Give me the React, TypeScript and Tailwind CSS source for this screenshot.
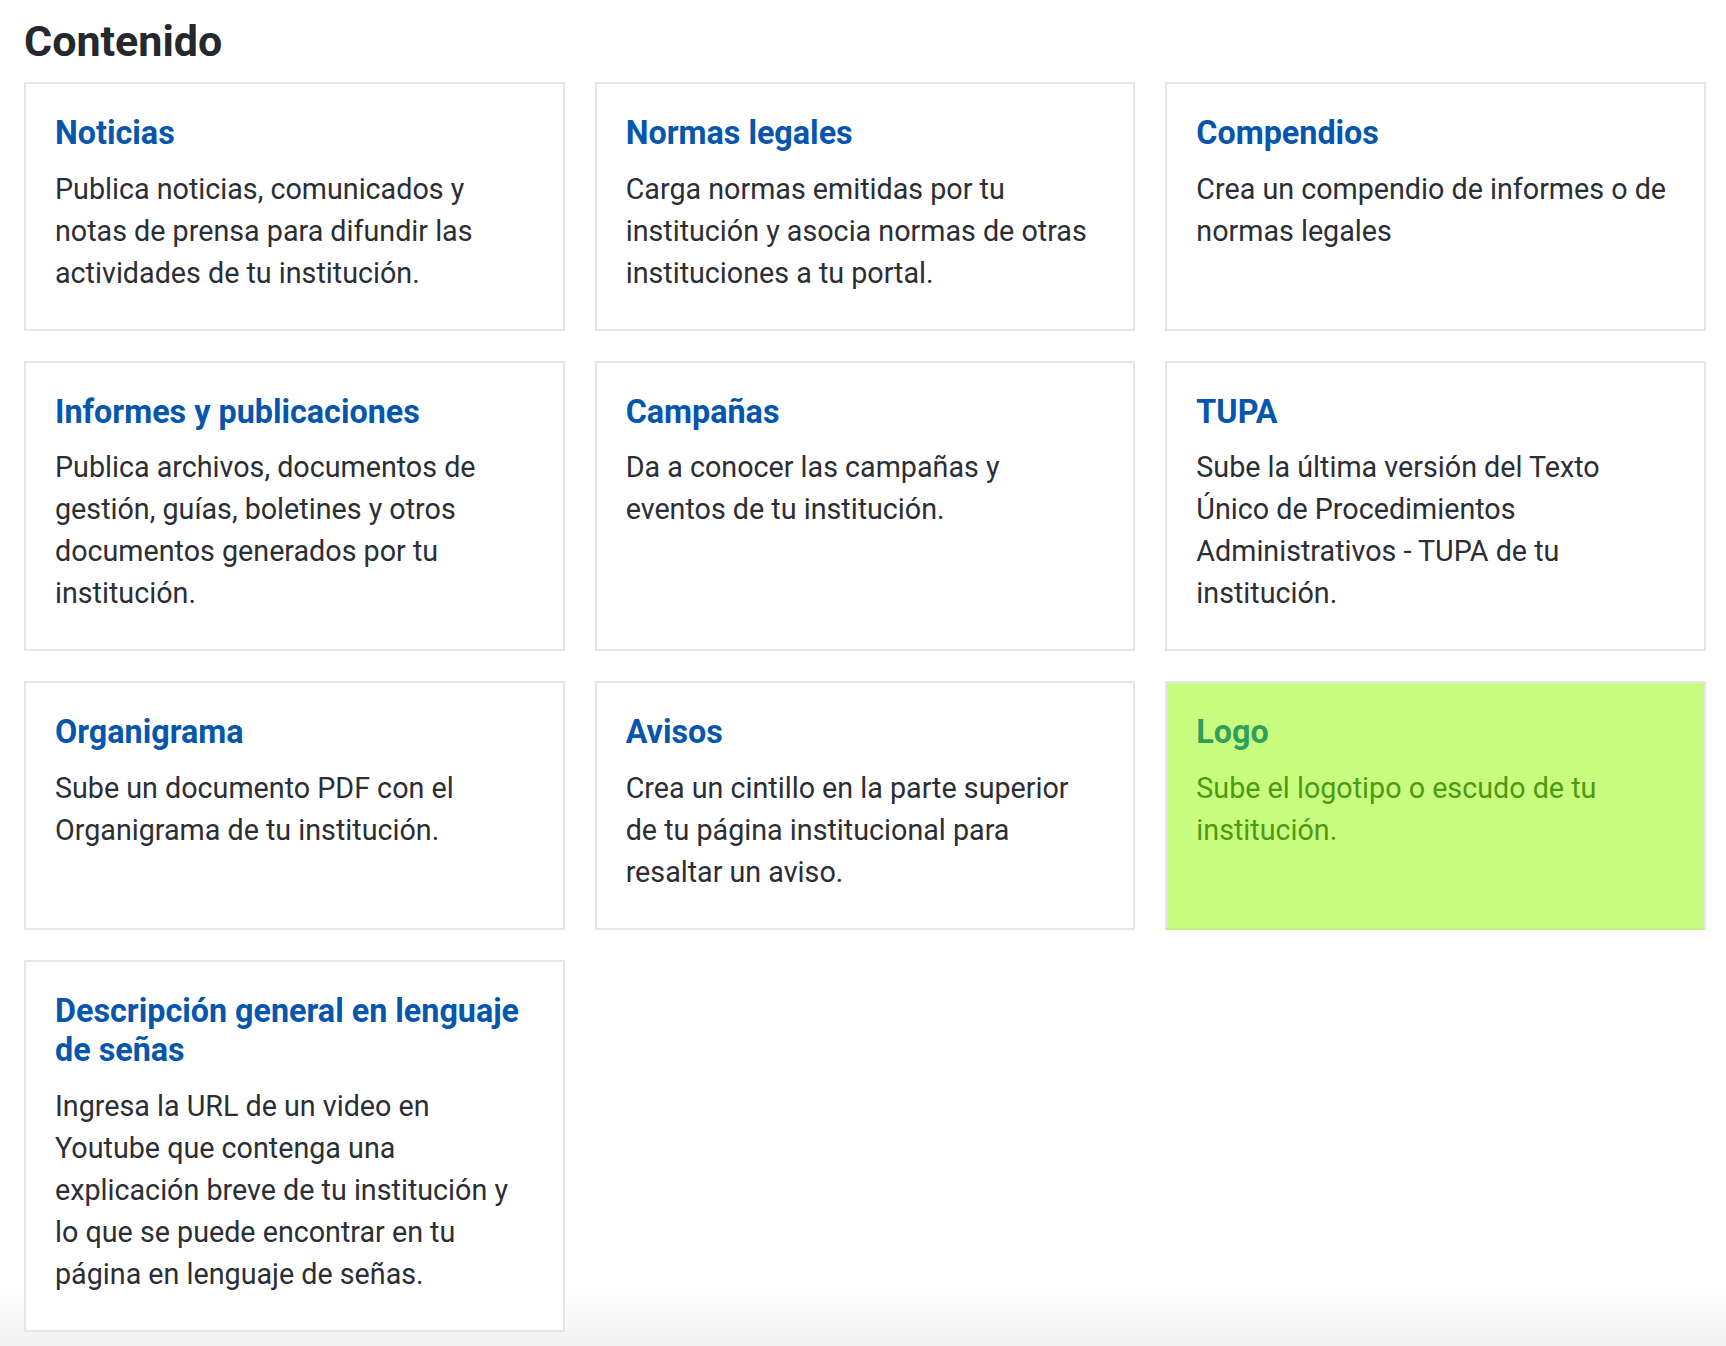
import * as React from 'react';

interface ContentCard {
  title: string;
  description: string;
  highlighted?: boolean;
}

const cards: ContentCard[] = [
  {
    title: 'Noticias',
    description:
      'Publica noticias, comunicados y notas de prensa para difundir las actividades de tu institución.',
  },
  {
    title: 'Normas legales',
    description:
      'Carga normas emitidas por tu institución y asocia normas de otras instituciones a tu portal.',
  },
  {
    title: 'Compendios',
    description: 'Crea un compendio de informes o de normas legales',
  },
  {
    title: 'Informes y publicaciones',
    description:
      'Publica archivos, documentos de gestión, guías, boletines y otros documentos generados por tu institución.',
  },
  {
    title: 'Campañas',
    description: 'Da a conocer las campañas y eventos de tu institución.',
  },
  {
    title: 'TUPA',
    description:
      'Sube la última versión del Texto Único de Procedimientos Administrativos - TUPA de tu institución.',
  },
  {
    title: 'Organigrama',
    description: 'Sube un documento PDF con el Organigrama de tu institución.',
  },
  {
    title: 'Avisos',
    description:
      'Crea un cintillo en la parte superior de tu página institucional para resaltar un aviso.',
  },
  {
    title: 'Logo',
    description: 'Sube el logotipo o escudo de tu institución.',
    highlighted: true,
  },
  {
    title: 'Descripción general en lenguaje de señas',
    description:
      'Ingresa la URL de un video en Youtube que contenga una explicación breve de tu institución y lo que se puede encontrar en tu página en lenguaje de señas.',
  },
];

function Card({ title, description, highlighted = false }: ContentCard) {
  return (
    <a
      href="#"
      className={
        highlighted
          ? 'block border-2 border-[#e6e6e6] border-b-[#bdf27a] bg-[#c9fd7f] pt-[30px] pb-[35px] pl-[29px] pr-[31px]'
          : 'block border-2 border-[#e6e6e6] bg-white pt-[30px] pb-[35px] pl-[29px] pr-[31px]'
      }
    >
      <h3
        className={
          highlighted
            ? 'text-[32.3px] leading-[39.5px] font-bold text-[#2f9f5c]'
            : 'text-[32.3px] leading-[39.5px] font-bold text-[#0656ae]'
        }
      >
        {title}
      </h3>
      <p
        className={
          highlighted
            ? 'mt-[14px] text-[28.7px] leading-[42px] text-[#4d9a12]'
            : 'mt-[14px] text-[28.7px] leading-[42px] text-[#2b2e34]'
        }
      >
        {description}
      </p>
    </a>
  );
}

export default function App() {
  return (
    <div className="min-h-[1346px] bg-[linear-gradient(to_bottom,#ffffff_1285px,#f3f3f3_1346px)] pl-[24px] pr-[20px] pt-[16px] font-['Roboto',sans-serif]">
      <h2 className="text-[43px] leading-[50px] font-bold text-[#25282d]">Contenido</h2>
      <div className="mt-[16px] grid w-[1682px] grid-cols-3 gap-[30px]">
        {cards.map((card) => (
          <Card key={card.title} {...card} />
        ))}
      </div>
    </div>
  );
}
